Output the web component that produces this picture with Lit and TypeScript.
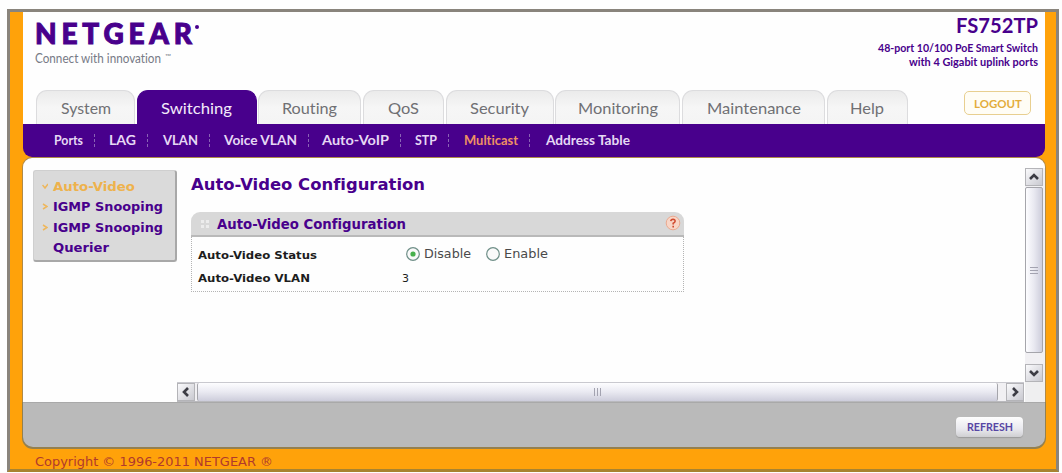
import { LitElement, html, css } from 'lit';
import { customElement, property, state } from 'lit/decorators.js';
import { classMap } from 'lit/directives/class-map.js';

interface Item {
    name: string;
    text: number;
    box: number;
}

const TABS: Item[] = [
    { name: 'System', text: 50, box: 99 },
    { name: 'Switching', text: 71, box: 120 },
    { name: 'Routing', text: 55, box: 103 },
    { name: 'QoS', text: 31, box: 81 },
    { name: 'Security', text: 59, box: 108 },
    { name: 'Monitoring', text: 80, box: 125 },
    { name: 'Maintenance', text: 94, box: 143 },
    { name: 'Help', text: 34, box: 81 },
];

const LINKS: Item[] = [
    { name: 'Ports', text: 29, box: 55 },
    { name: 'LAG', text: 27, box: 54 },
    { name: 'VLAN', text: 35, box: 61 },
    { name: 'Voice VLAN', text: 73, box: 98 },
    { name: 'Auto-VoIP', text: 67, box: 93 },
    { name: 'STP', text: 22, box: 49 },
    { name: 'Multicast', text: 54, box: 82 },
    { name: 'Address Table', text: 84, box: 95 },
];

// One line of text, set to an exact width. The baseline is 15px below the top.
@customElement('fit-text')
export class FitText extends LitElement {
    @property() text = '';
    @property({ type: Number }) width = 0;
    @property() adjust = 'spacingAndGlyphs';

    static styles = css`
    :host { display: block; height: 20px; flex: none; font-variant-ligatures: none; }
    svg { display: block; overflow: visible; }
    text { fill: currentColor; }
  `;

    render() {
        return html`
      <svg width=${this.width} height="20">
        <text x="0" y="15" textLength=${this.width} lengthAdjust=${this.adjust}>${this.text}</text>
      </svg>
    `;
    }
}

@customElement('scroll-bar')
export class ScrollBar extends LitElement {
    @property({ type: Boolean, reflect: true }) vertical = false;

    static styles = css`
    :host {
      display: flex;
      box-sizing: border-box;
      background: #f1f0f3;
      border-top: 1px solid #c9c9cf;
      border-bottom: 1px solid #b9b9bd;
    }
    :host([vertical]) {
      flex-direction: column;
      border: none;
      padding-right: 2px;
    }
    .arrow {
      box-sizing: border-box;
      width: 18px;
      height: 18px;
      flex: none;
      display: flex;
      align-items: center;
      justify-content: center;
      border: 1px solid #b4b4b8;
      background: linear-gradient(135deg, #fafafc, #c9c9d0);
    }
    .arrow svg { fill: none; stroke: #3c3c44; stroke-width: 2.6; }
    .thumb {
      flex: 1;
      box-sizing: border-box;
      margin: 0 8px 0 2px;
      display: flex;
      align-items: center;
      justify-content: center;
      gap: 2px;
      border: 1px solid #a5a5ab;
      border-width: 0 1px;
      border-radius: 2px;
      background: linear-gradient(#fdfdff, #e9e9f1 50%, #cdcddb);
    }
    :host([vertical]) .thumb {
      flex-direction: column;
      margin: 1px 0 11px;
      border-width: 1px;
      background: linear-gradient(90deg, #fdfdff, #e9e9f1 50%, #cdcddb);
    }
    i { width: 1px; height: 8px; background: #a3a3b0; }
    :host([vertical]) i { width: 8px; height: 1px; }
  `;

    arrow(d: string) {
        return html`<span class="arrow"><svg width="10" height="10" viewBox="0 0 10 10"><path d=${d} /></svg></span>`;
    }

    render() {
        return html`
      ${this.arrow(this.vertical ? 'M1 7L5 3L9 7' : 'M7 1L3 5L7 9')}
      <span class="thumb"><i></i><i></i><i></i></span>
      ${this.arrow(this.vertical ? 'M1 3L5 7L9 3' : 'M3 1L7 5L3 9')}
    `;
    }
}

@customElement('app-root')
export class AppRoot extends LitElement {
    @state() tab = 'Switching';
    @state() link = 'Multicast';
    @state() status = 'Disable';

    static styles = css`
    :host {
      display: block;
      width: 1062px;
      height: 473px;
      padding: 9px 3px 1px 7px;
      box-sizing: border-box;
      overflow: hidden;
      background: #fefefe;
      font-family: 'DejaVu Sans', sans-serif;
      color: #48008c;
    }
    .window {
      height: 463px;
      box-sizing: border-box;
      border: 3px solid #89847c;
      border-bottom-color: #a88330;
      padding: 0 11px 0 13px;
      background: #ffa20a;
    }
    .header {
      height: 112px;
      background: #fefefe;
      display: flex;
      flex-direction: column;
      justify-content: space-between;
      font-family: Lato, sans-serif;
    }
    .brand { display: flex; justify-content: space-between; padding: 0 7px 0 12px; }
    .logo { display: flex; gap: 3px; padding-top: 16px; height: 20px; }
    .logo fit-text { padding-top: 1px; font-size: 28px; font-weight: 900; stroke: currentColor; stroke-width: 1px; }
    .logo i { width: 4px; height: 4px; margin-top: -3px; border-radius: 50%; background: currentColor; }
    .tagline { display: flex; gap: 4px; color: #777a86; font-size: 12.5px; }
    .tagline .tm { font-size: 7px; margin-top: -4px; }
    .product { display: flex; flex-direction: column; align-items: flex-end; }
    .model { font-size: 21.5px; font-weight: 700; margin-top: 6px; }
    .about { font-size: 12px; font-weight: 700; margin-top: -1px; }
    .about + .about { margin-top: -6px; }
    .tabbar { display: flex; align-items: flex-end; padding: 0 14px 0 13px; }
    .tab {
      box-sizing: border-box;
      height: 34px;
      margin-right: 1.7px;
      padding-top: 8px;
      display: flex;
      justify-content: center;
      border: 1px solid #dcdcde;
      border-bottom: none;
      border-radius: 11px 11px 0 0;
      background: linear-gradient(#ebebeb, #f6f6f6 50%, #f4f4f4);
      color: #707074;
      font-size: 16px;
      cursor: pointer;
    }
    .tab.on { background: #48008c; border-color: #48008c; color: #f3eafa; }
    .logout {
      box-sizing: border-box;
      width: 67px;
      height: 24px;
      margin: 0 0 9px auto;
      padding: 1px 0 0;
      display: flex;
      justify-content: center;
      border: 1.5px solid #e8cf90;
      border-radius: 5px;
      background: #fffdf5;
      color: #e3ad3c;
      font: bold 11px Lato, sans-serif;
    }
    .nav {
      height: 33px;
      box-sizing: border-box;
      padding: 6px 0 0 31px;
      display: flex;
      background: #48008c;
      border-radius: 0 0 9px 9px;
      color: #e6d8f4;
      font: bold 14px Lato, sans-serif;
    }
    .link { display: flex; cursor: pointer; }
    .link.on { color: #ee9163; }
    .link:not(:last-child)::after {
      content: '';
      height: 13px;
      margin: 4px 0 0 11px;
      border-left: 1px dashed #8a63b5;
    }
    .content {
      height: 244px;
      margin-top: 1px;
      display: grid;
      grid-template-columns: 154px 1fr;
      background: #fefefe;
      border-radius: 9px 9px 0 0;
      box-shadow: 0 0 0 1px #b08a48;
    }
    .menu {
      box-sizing: border-box;
      width: 144px;
      height: 92px;
      margin: 12px 0 0 10px;
      padding: 5px 0 0 8px;
      background: #dadada;
      border: 1px solid #cfcfcf;
      border-right: 2px solid #a8a8a8;
      border-bottom: 2px solid #a8a8a8;
      border-radius: 3px;
      font-size: 13px;
      font-weight: bold;
    }
    .entry { display: flex; gap: 5px; height: 20.4px; }
    .entry svg { margin-top: 7px; flex: none; fill: none; stroke: #eeb75c; stroke-width: 1.5; }
    .entry.on { color: #eeb24c; }
    .frame {
      margin-top: 10px;
      min-width: 0;
      display: grid;
      grid-template-columns: 1fr 20px;
      grid-template-rows: 1fr 20px;
    }
    .corner { background: #efeff0; }
    scroll-bar:not([vertical]) { margin-right: 1px; }
    .page { padding: 7px 0 0 14px; }
    .title { font-size: 16px; font-weight: bold; }
    .panel { width: 493px; margin-top: 17px; }
    .bar {
      height: 25px;
      box-sizing: border-box;
      padding: 2px 3px 0 10px;
      display: flex;
      justify-content: space-between;
      background: #d8d8d8;
      border-bottom: 2px solid #b9b9b9;
      border-radius: 9px 9px 0 0;
      font-size: 14.5px;
      font-weight: bold;
    }
    .name { display: flex; gap: 8px; }
    .grip { width: 8px; height: 8px; margin-top: 6px; fill: #ececec; }
    .help { margin-top: 1px; }
    .fields {
      box-sizing: border-box;
      height: 55px;
      padding: 7px 0 0 6px;
      border: 1px dotted #b4b4b4;
      border-top: none;
      color: #1d1d1d;
    }
    .field { display: flex; height: 23px; font-size: 11px; }
    .key { width: 204px; font-weight: bold; }
    .choices { display: flex; gap: 15px; margin: -1px 0 0 4px; font-size: 13px; color: #4a4a4a; }
    .choice { display: flex; gap: 4px; cursor: pointer; }
    .choice svg { margin-top: 4px; }
    .footer {
      height: 45px;
      box-sizing: border-box;
      padding: 14px 22px 0 0;
      display: flex;
      justify-content: flex-end;
      background: #bababa;
      border-top: 1px solid #a9a9a9;
      border-radius: 0 0 10px 10px;
      box-shadow: 0 1px 0 1px #94804f;
    }
    .refresh {
      width: 67px;
      height: 20px;
      padding: 0;
      display: flex;
      justify-content: center;
      border: none;
      border-radius: 4px;
      background: linear-gradient(#fdfdfd, #e9e9ee 60%, #cfcfd2);
      box-shadow: 0 1px 1px #9c9c9c;
      color: #5746a4;
      font: bold 11.5px Lato, sans-serif;
    }
    .refresh fit-text { margin-top: -1px; }
    .copyright { margin: 4px 0 0 12px; color: #b13a2c; font-size: 12px; }
  `;

    label(text: string, width: number, cls = '') {
        return html`<fit-text class=${cls} .text=${text} .width=${width}></fit-text>`;
    }

    entry(text: string, width: number, on = false) {
        return html`
      <div class=${classMap({ entry: true, on })}>
        <svg width="6" height="7" viewBox="0 0 6 7"><path d=${on ? 'M0.5 2L3 5L6 1' : 'M1 1L5 3.5L1 6'} /></svg>
        ${this.label(text, width)}
      </div>
    `;
    }

    choice(text: string, width: number) {
        return html`
      <span class="choice" @click=${() => (this.status = text)}>
        <svg width="14" height="14" viewBox="0 0 14 14">
          <circle cx="7" cy="7" r="6.3" fill="#fafafa" stroke="#6f8f88" stroke-width="1.2" />
          <circle cx="7" cy="7" r=${this.status === text ? 2.6 : 0} fill="#47b04c" />
        </svg>
        ${this.label(text, width)}
      </span>
    `;
    }

    render() {
        return html`
      <div class="window">
        <div class="header">
          <div class="brand">
            <div>
              <div class="logo">
                <fit-text text="NETGEAR" width="157" adjust="spacing"></fit-text>
                <i></i>
              </div>
              <div class="tagline">${this.label('Connect with innovation', 126)}${this.label('™', 6, 'tm')}</div>
            </div>
            <div class="product">
              ${this.label('FS752TP', 82, 'model')}
              ${this.label('48-port 10/100 PoE Smart Switch', 160, 'about')}
              ${this.label('with 4 Gigabit uplink ports', 129, 'about')}
            </div>
          </div>
          <div class="tabbar">
            ${TABS.map(t => html`
              <div class=${classMap({ tab: true, on: t.name === this.tab })} style="width:${t.box}px"
                @click=${() => (this.tab = t.name)}>${this.label(t.name, t.text)}</div>
            `)}
            <button class="logout">${this.label('LOGOUT', 48)}</button>
          </div>
        </div>
        <div class="nav">
          ${LINKS.map(l => html`
            <div class=${classMap({ link: true, on: l.name === this.link })} style="width:${l.box}px"
              @click=${() => (this.link = l.name)}>${this.label(l.name, l.text)}</div>
          `)}
        </div>
        <div class="content">
          <div class="menu">
            ${this.entry('Auto-Video', 82, true)}
            ${this.entry('IGMP Snooping', 110)}
            ${this.entry('IGMP Snooping', 110)}
            <div class="entry"><svg width="6" height="7"></svg>${this.label('Querier', 56)}</div>
          </div>
          <div class="frame">
            <div class="page">
              ${this.label('Auto-Video Configuration', 234, 'title')}
              <div class="panel">
                <div class="bar">
                  <div class="name">
                    <svg class="grip" viewBox="0 0 8 8"><path d="M0 0h3v3H0zM5 0h3v3H5zM0 5h3v3H0zM5 5h3v3H5z" /></svg>
                    ${this.label('Auto-Video Configuration', 189)}
                  </div>
                  <svg class="help" width="16" height="16" viewBox="0 0 16 16">
                    <circle cx="8" cy="8" r="6.8" fill="#f8d5c6" stroke="#eba98f" />
                    <path d="M5.8 6.2Q6 4.2 8 4.2Q10.2 4.3 10.1 6.2Q10 7.4 8.2 8.2V9.5M8.2 10.8V12.4" fill="none" stroke="#d0492e" stroke-width="1.6" />
                  </svg>
                </div>
                <div class="fields">
                  <div class="field">
                    <div class="key">${this.label('Auto-Video Status', 119)}</div>
                    <div class="choices">${this.choice('Disable', 47)}${this.choice('Enable', 44)}</div>
                  </div>
                  <div class="field">
                    <div class="key">${this.label('Auto-Video VLAN', 112)}</div>
                    ${this.label('3', 7)}
                  </div>
                </div>
              </div>
            </div>
            <scroll-bar vertical></scroll-bar>
            <scroll-bar></scroll-bar>
            <div class="corner"></div>
          </div>
        </div>
        <div class="footer">
          <button class="refresh">${this.label('REFRESH', 46)}</button>
        </div>
        <div class="copyright">${this.label('Copyright © 1996-2011 NETGEAR ®', 238)}</div>
      </div>
    `;
    }
}
